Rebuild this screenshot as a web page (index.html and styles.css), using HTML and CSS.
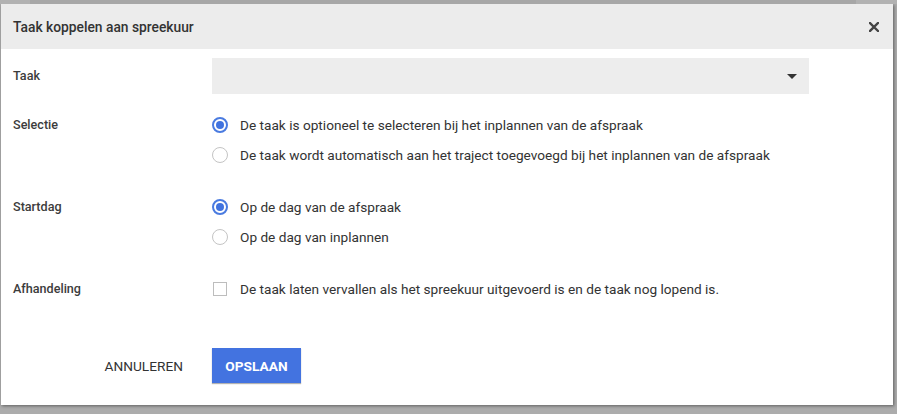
FILE: index.html
```html
<!DOCTYPE html>
<html lang="nl">
<head>
<meta charset="utf-8">
<title>Taak koppelen aan spreekuur</title>
<link rel="stylesheet" href="styles.css">
</head>
<body>
<div class="backdrop">
  <div class="backdrop-top">
    <div class="bt-a"></div>
    <div class="bt-b"></div>
    <div class="bt-c"></div>
  </div>
  <div class="dialog">
    <div class="dialog-header">
      <span class="dialog-title">Taak koppelen aan spreekuur</span>
      <button class="close-btn" aria-label="Sluiten">
        <svg width="10" height="10" viewBox="0 0 10 10"><path d="M1 1L9 9M9 1L1 9" stroke="#444" stroke-width="2.4" stroke-linecap="square"/></svg>
      </button>
    </div>
    <div class="dialog-body">
      <div class="form-row row-taak">
        <div class="label label-select">Taak</div>
        <div class="select">
          <svg class="caret" width="10" height="5" viewBox="0 0 10 5"><path d="M0 0H10L5 5Z" fill="#333"/></svg>
        </div>
      </div>
      <div class="form-row">
        <div class="label">Selectie</div>
        <div class="options">
          <label class="option"><span class="radio checked"></span>De taak is optioneel te selecteren bij het inplannen van de afspraak</label>
          <label class="option"><span class="radio"></span>De taak wordt automatisch aan het traject toegevoegd bij het inplannen van de afspraak</label>
        </div>
      </div>
      <div class="form-row">
        <div class="label">Startdag</div>
        <div class="options">
          <label class="option"><span class="radio checked"></span>Op de dag van de afspraak</label>
          <label class="option"><span class="radio"></span>Op de dag van inplannen</label>
        </div>
      </div>
      <div class="form-row">
        <div class="label">Afhandeling</div>
        <div class="options">
          <label class="option"><span class="checkbox"></span>De taak laten vervallen als het spreekuur uitgevoerd is en de taak nog lopend is.</label>
        </div>
      </div>
      <div class="actions">
        <button class="btn btn-flat">ANNULEREN</button>
        <button class="btn btn-primary">OPSLAAN</button>
      </div>
    </div>
  </div>
</div>
</body>
</html>
```
FILE: styles.css
```css
html, body {
  margin: 0;
  padding: 0;
  height: 100%;
}
body {
  background: #acacac;
  font-family: Roboto, "Noto Sans", Arial, sans-serif;
  color: #333;
  overflow: hidden;
}
.backdrop {
  padding-left: 1px;
}
.backdrop-top {
  display: flex;
  height: 4px;
  margin-left: -1px;
}
.bt-a { width: 30px; background: #b2b2b2; }
.bt-b { flex: 1; background: #a7a7a7; }
.bt-c { width: 41px; background: #b2b2b2; }

.dialog {
  width: 892px;
  height: 401px;
  background: #fff;
  box-shadow: 1px 1px 3px rgba(0,0,0,0.45);
  display: flex;
  flex-direction: column;
}
.dialog-header {
  height: 45px;
  background: #ececec;
  display: flex;
  align-items: center;
  justify-content: space-between;
  padding: 0 14px 0 12px;
  flex: none;
}
.dialog-title {
  font-size: 13.8px;
  font-weight: 500;
  color: #333;
  padding-top: 1px;
}
.close-btn {
  border: 0;
  background: none;
  padding: 0;
  width: 10px;
  height: 10px;
  display: flex;
  margin-top: 1px;
}
.dialog-body {
  padding: 9px 0 0 12px;
}
.form-row {
  display: grid;
  grid-template-columns: 199px 1fr;
  margin-bottom: 22px;
}
.row-taak {
  margin-bottom: 16px;
}
.label {
  font-size: 12.6px;
  font-weight: 500;
  color: #3c3c3c;
  line-height: 30px;
  height: 30px;
}
.label-select {
  line-height: 36px;
  height: 36px;
}
.select {
  width: 597px;
  height: 36px;
  background: #ededed;
  display: flex;
  align-items: center;
  justify-content: flex-end;
  padding-right: 12px;
  box-sizing: border-box;
}
.options {
  display: flex;
  flex-direction: column;
}
.option {
  display: flex;
  align-items: center;
  height: 30px;
  font-size: 13.65px;
  color: #333;
}
.radio {
  width: 16px;
  height: 16px;
  box-sizing: border-box;
  border: 1px solid #c4c4c4;
  border-radius: 50%;
  margin-right: 12px;
  flex: none;
  position: relative;
}
.radio.checked {
  border: 2px solid #4a7be0;
}
.radio.checked::after {
  content: "";
  position: absolute;
  left: 2px;
  top: 2px;
  width: 8px;
  height: 8px;
  border-radius: 50%;
  background: #4173df;
}
.checkbox {
  width: 14px;
  height: 14px;
  box-sizing: border-box;
  border: 1px solid #bdbdbd;
  margin-left: 1px;
  margin-right: 13px;
  flex: none;
}
.actions {
  display: grid;
  grid-template-columns: 199px auto;
  justify-content: start;
  align-items: center;
  margin-top: 44px;
}
.btn {
  font-family: inherit;
  font-size: 13.7px;
  border: 0;
  height: 35px;
  cursor: pointer;
}
.btn-flat {
  justify-self: end;
  background: none;
  color: #333;
  padding: 0 16px;
  margin-right: 13px;
}
.btn-primary {
  background: #4373e0;
  color: #fff;
  font-weight: 700;
  padding: 0;
  width: 89px;
  box-shadow: 0 1px 1px rgba(0,0,0,0.3);
}
```
